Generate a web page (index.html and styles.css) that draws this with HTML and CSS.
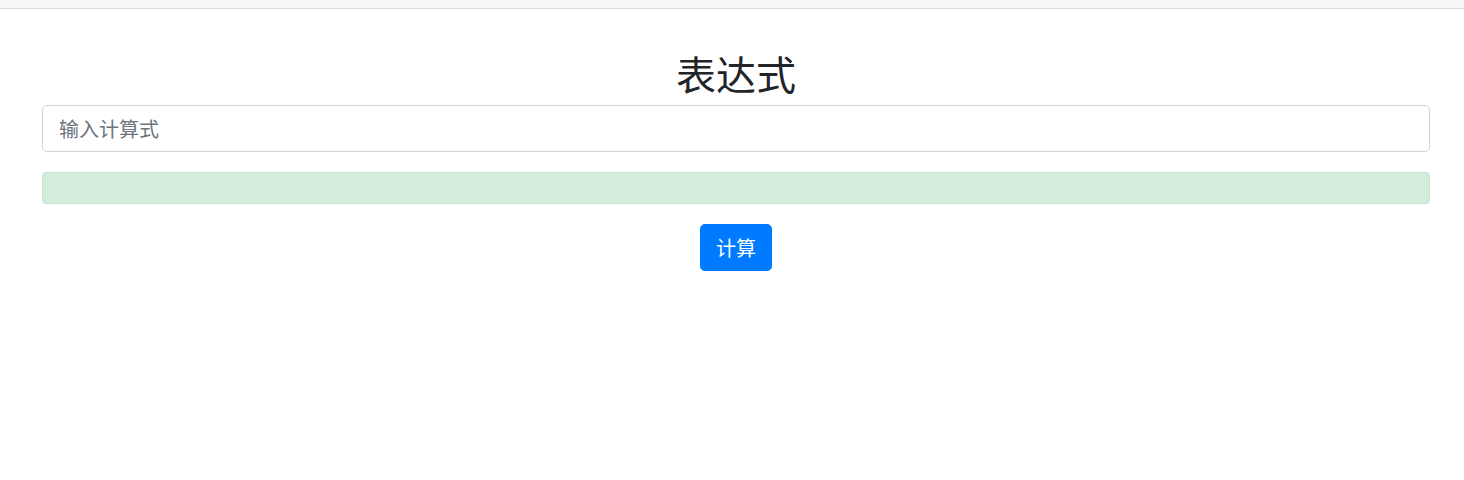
FILE: index.html
```html
<!DOCTYPE html>
<html lang="zh">
<head>
<meta charset="utf-8">
<title>表达式</title>
<link rel="stylesheet" href="styles.css">
</head>
<body>
<div class="topbar"></div>
<main class="page">
  <h1 class="title">表达式</h1>
  <input class="expr-input" type="text" placeholder="输入计算式">
  <div class="result"></div>
  <div class="actions">
    <button class="calc-btn" type="button">计算</button>
  </div>
</main>
</body>
</html>
```

FILE: styles.css
```css
html, body {
  margin: 0;
  padding: 0;
  background: #fff;
  font-family: "Noto Sans CJK SC", "Noto Sans", "Liberation Sans", sans-serif;
  color: #212529;
}

.topbar {
  height: 8px;
  background: #f7f7f7;
  border-bottom: 1px solid #dedede;
}

.page {
  padding: 0 34px 0 42px;
  display: flex;
  flex-direction: column;
}

.title {
  margin: 40px 0 8px;
  font-size: 40px;
  font-weight: 400;
  line-height: 48px;
  text-align: center;
  color: #212529;
}

.expr-input {
  box-sizing: border-box;
  height: 47px;
  padding: 7px 16px;
  font-family: inherit;
  font-size: 20px;
  line-height: 30px;
  color: #495057;
  background: #fff;
  border: 1px solid #ced4da;
  border-radius: 4.8px;
  outline: none;
}

.expr-input::placeholder {
  color: #6c757d;
}

.result {
  box-sizing: border-box;
  height: 32px;
  margin-top: 20px;
  background: #d4edda;
  border: 1px solid #c3e6cb;
  border-radius: 4px;
}

.actions {
  display: flex;
  justify-content: center;
  margin-top: 20px;
}

.calc-btn {
  box-sizing: border-box;
  width: 72px;
  height: 47px;
  padding: 7px 0;
  font-family: inherit;
  font-size: 20px;
  line-height: 30px;
  color: #fff;
  background: #007bff;
  border: 1px solid #007bff;
  border-radius: 4.8px;
}
```
